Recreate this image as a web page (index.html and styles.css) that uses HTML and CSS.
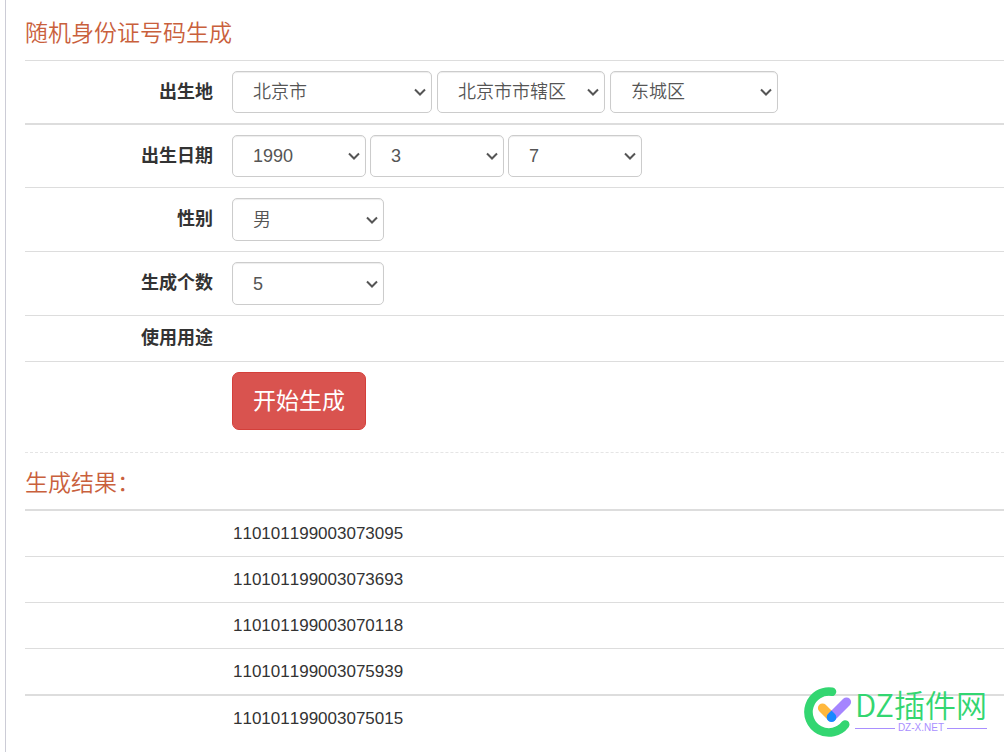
FILE: index.html
```html
<!DOCTYPE html>
<html lang="zh-CN">
<head>
<meta charset="utf-8">
<meta name="viewport" content="width=device-width, initial-scale=1">
<title>随机身份证号码生成</title>
<link rel="stylesheet" href="styles.css">
</head>
<body>
<main class="panel">
  <form class="generator">
    <h1 class="title">随机身份证号码生成</h1>
    <div class="row">
      <label class="label" for="province">出生地</label>
      <div class="controls">
        <select class="select select-province" id="province"><option>北京市</option></select>
        <select class="select select-area" aria-label="城市"><option>北京市市辖区</option></select>
        <select class="select select-area" aria-label="区县"><option>东城区</option></select>
      </div>
    </div>
    <div class="row row-strong">
      <label class="label" for="year">出生日期</label>
      <div class="controls controls-date">
        <select class="select select-date" id="year"><option>1990</option></select>
        <select class="select select-date" aria-label="月"><option>3</option></select>
        <select class="select select-date" aria-label="日"><option>7</option></select>
      </div>
    </div>
    <div class="row">
      <label class="label" for="gender">性别</label>
      <div class="controls">
        <select class="select select-short" id="gender"><option>男</option></select>
      </div>
    </div>
    <div class="row">
      <label class="label" for="count">生成个数</label>
      <div class="controls">
        <select class="select select-short" id="count"><option>5</option></select>
      </div>
    </div>
    <div class="row">
      <span class="label">使用用途</span>
    </div>
    <div class="row row-submit">
      <div class="controls"><button class="submit" type="button">开始生成</button></div>
    </div>
  </form>
  <section class="results">
    <h2 class="title">生成结果：</h2>
    <ul class="list">
      <li class="item item-strong">110101199003073095</li>
      <li class="item">110101199003073693</li>
      <li class="item">110101199003070118</li>
      <li class="item">110101199003075939</li>
      <li class="item item-strong">110101199003075015</li>
    </ul>
  </section>
</main>
<div class="brand">
  <svg class="brand-mark" viewBox="0 0 48 52" width="48" height="52" aria-hidden="true">
    <path d="M28 5.700A20.500 20.500 0 1 0 41.200 38.500" fill="none" stroke="#33d671" stroke-width="8.600" stroke-linecap="round"/>
    <path d="M18.500 22L27 30.500" stroke="#ffb83d" stroke-width="9.200" stroke-linecap="round"/>
    <path d="M27.500 31L42.500 16" stroke="#a585ff" stroke-width="9.200" stroke-linecap="round"/>
    <path d="M27.500 24.500L31 28A4.800 4.800 0 1 1 24 28Z" fill="#1688ff"/>
  </svg>
  <div class="brand-text">
    <span class="brand-name">DZ插件网</span>
    <span class="brand-site">DZ-X.NET</span>
  </div>
</div>
</body>
</html>
```

FILE: styles.css
```css
* {
  box-sizing: border-box;
}

body {
  margin: 0;
  background: #fff;
  color: #333;
  font-family: "Liberation Sans", "Noto Sans CJK SC", sans-serif;
  font-size: 17px;
  line-height: 25px;
  overflow: hidden;
}

.panel {
  min-height: 100vh;
  margin-left: 5px;
  padding: 14px 0 0 19px;
  border-left: 1px solid #ccccd6;
}

.title {
  margin: 0;
  color: #c9603c;
  font-size: 23px;
  font-weight: 350;
  line-height: 38px;
}

.generator {
  padding-bottom: 22px;
  border-bottom: 1px dashed #e5e5e5;
}

.generator .title {
  padding-bottom: 8px;
}

.row {
  display: grid;
  grid-template-columns: 188px 1fr;
  column-gap: 19px;
  align-items: center;
  padding: 10px 0;
  border-top: 1px solid #ddd;
}

.row-strong {
  border-top-width: 2px;
}

.row-submit {
  padding-bottom: 0;
}

.label {
  font-size: 18px;
  font-weight: 700;
  text-align: right;
}

.controls {
  grid-column: 2;
  display: flex;
  gap: 5px;
}

.controls-date {
  gap: 4px;
}

.select {
  appearance: none;
  height: 42px;
  padding: 0 20px;
  border: 1px solid #ccc;
  border-radius: 5px;
  background: #fff url("data:image/svg+xml,%3Csvg xmlns='http://www.w3.org/2000/svg' width='12' height='8' viewBox='0 0 12 8'%3E%3Cpath d='M1 1.500l5 5 5-5' fill='none' stroke='%23555' stroke-width='2'/%3E%3C/svg%3E") no-repeat right 5px center;
  box-shadow: inset 0 1px 1px rgba(0, 0, 0, 0.075);
  color: #555;
  font-family: inherit;
  font-size: 18px;
  font-weight: 350;
}

.select-province {
  width: 200px;
}

.select-area {
  width: 168px;
}

.select-date {
  width: 134px;
}

.select-short {
  width: 152px;
  height: 43px;
}

.submit {
  height: 58px;
  padding: 0 20px 4px;
  border: 1px solid #d43f3a;
  border-radius: 7px;
  background: #d9534f;
  color: #fff;
  font-family: inherit;
  font-size: 23px;
}

.results {
  padding-top: 11px;
}

.results .title {
  padding-bottom: 7px;
}

.list {
  margin: 0;
  padding: 0;
  list-style: none;
  font-kerning: none;
}

.item {
  padding: 10px 0 10px 208px;
  border-top: 1px solid #ddd;
}

.item.item-strong {
  border-top-width: 2px;
}

.brand {
  position: absolute;
  right: 17px;
  bottom: 14px;
  display: flex;
  gap: 3px;
  font-family: "Noto Sans CJK SC", sans-serif;
}

.brand-text {
  display: flex;
  flex-direction: column;
}

.brand-name {
  color: #33d671;
  font-size: 31px;
  font-weight: 350;
  line-height: 36px;
}

.brand-site {
  display: flex;
  align-items: center;
  gap: 3px;
  color: #a98fff;
  font-family: "Liberation Sans", sans-serif;
  font-size: 10px;
  line-height: 12px;
}

.brand-site::before,
.brand-site::after {
  content: "";
  flex: 1;
  border-top: 1px solid #a98fff;
}
```
